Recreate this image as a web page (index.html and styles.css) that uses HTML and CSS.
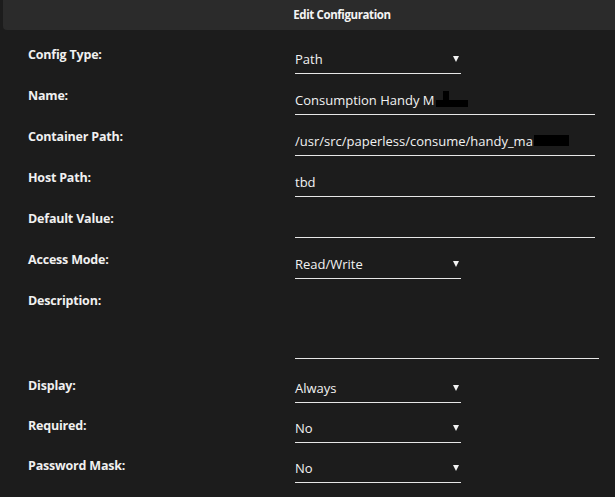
FILE: index.html
```html
<!DOCTYPE html>
<html>
<head>
<meta charset="utf-8">
<link rel="stylesheet" href="styles.css">
</head>
<body>
<div class="header"><span class="title">Edit Configuration</span></div>
<div class="form">
  <div class="row">
    <div class="label">Config Type:</div>
    <div class="field select">Path<span class="arrow"></span></div>
  </div>
  <div class="row">
    <div class="label">Name:</div>
    <div class="field text">Consumption Handy M<span class="redact r1"><span class="bump"></span></span></div>
  </div>
  <div class="row">
    <div class="label">Container Path:</div>
    <div class="field text">/usr/src/paperless/consume/handy_ma<span class="redact r2"></span></div>
  </div>
  <div class="row">
    <div class="label">Host Path:</div>
    <div class="field text">tbd</div>
  </div>
  <div class="row">
    <div class="label">Default Value:</div>
    <div class="field text"></div>
  </div>
  <div class="row">
    <div class="label">Access Mode:</div>
    <div class="field select">Read/Write<span class="arrow"></span></div>
  </div>
  <div class="row desc-row">
    <div class="label">Description:</div>
    <div class="field area"></div>
  </div>
  <div class="row low">
    <div class="label">Display:</div>
    <div class="field select">Always<span class="arrow"></span></div>
  </div>
  <div class="row low">
    <div class="label">Required:</div>
    <div class="field select">No<span class="arrow"></span></div>
  </div>
  <div class="row low">
    <div class="label">Password Mask:</div>
    <div class="field select">No<span class="arrow"></span></div>
  </div>
</div>
</body>
</html>
```
FILE: styles.css
```css
html, body {
  margin: 0;
  padding: 0;
  background: #1c1c1c;
  overflow: hidden;
}
body {
  font-family: "Open Sans", "Noto Sans", sans-serif;
  color: #f2f2f2;
  font-size: 13px;
  width: 615px;
  height: 497px;
}
.header {
  margin-left: 3px;
  height: 30px;
  background: #2b2b2b;
  border-bottom-left-radius: 4px;
  display: flex;
  align-items: center;
  justify-content: center;
  padding-left: 66px;
}
.title {
  font-weight: 700;
  font-size: 11.5px;
  letter-spacing: -0.4px;
  line-height: 16px;
  color: #f4f4f4;
}
.form {
  padding-top: 18px;
  padding-left: 28px;
}
.row {
  display: flex;
  height: 41px;
}
.row.desc-row { height: 85px; }
.row.low { height: 40px; }
.label {
  width: 267px;
  margin-top: -1px;
  font-weight: 700;
  font-size: 12.5px;
  letter-spacing: -0.2px;
  line-height: 16px;
  color: #f0f0f0;
}
.field {
  box-sizing: border-box;
  height: 26px;
  padding-top: 3px;
  line-height: 16px;
  border-bottom: 1px solid #e6e6e6;
  display: flex;
  align-items: flex-start;
  white-space: nowrap;
}
.low .field {
  height: 24px;
  padding-top: 1px;
}
.select {
  width: 166px;
  justify-content: space-between;
}
.text { width: 300px; }
.area {
  width: 304px;
  height: 65px;
}
.arrow {
  width: 0;
  height: 0;
  margin-top: 5px;
  margin-right: 2px;
  border-left: 3px solid transparent;
  border-right: 3px solid transparent;
  border-top: 6px solid #f2f2f2;
}
.redact {
  display: inline-block;
  background: #000;
}
.r1 {
  width: 32px;
  height: 7px;
  margin-top: 8px;
  margin-left: 1px;
  position: relative;
}
.bump {
  position: absolute;
  left: 7px;
  top: -9px;
  width: 6px;
  height: 10px;
  background: #000;
}
.r2 {
  width: 35px;
  height: 11px;
  margin-top: 2px;
  margin-left: 1px;
}
```
